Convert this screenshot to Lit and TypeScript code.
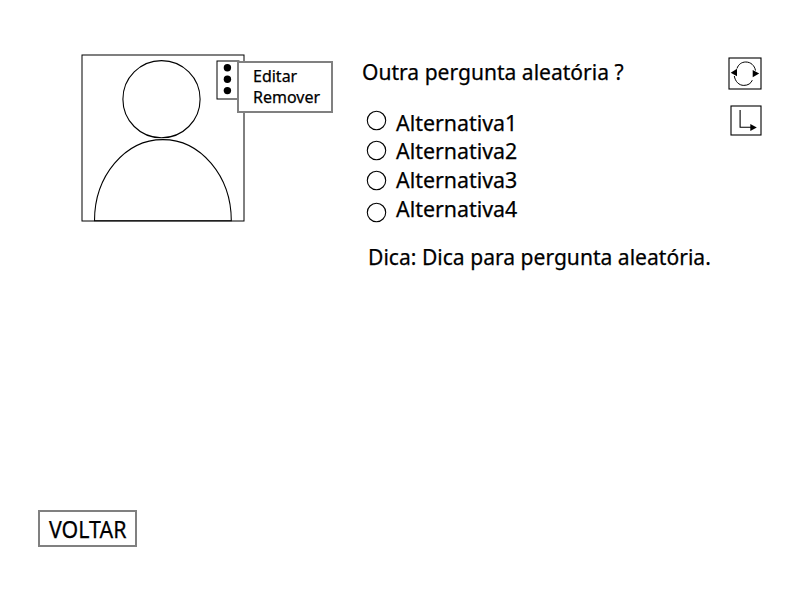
import { LitElement, html, css } from "lit";
import { customElement } from "lit/decorators.js";

const options = ["Alternativa1", "Alternativa2", "Alternativa3", "Alternativa4"];

@customElement("user-picture")
class UserPicture extends LitElement {
  static styles = css`
    :host { display: block; position: relative; width: 164px; height: 168px; }
    svg { display: block; }
    .menu {
      position: absolute; left: 156px; top: 7px; box-sizing: border-box;
      width: 96px; height: 52px; border: 2px solid #808080; background: #fff;
      padding: 3px 0 0 14px;
      font: 16px/21px "Noto Sans", "Open Sans", sans-serif; color: #000;
      -webkit-text-stroke: 0.25px #000;
    }
    .item { white-space: nowrap; }
  `;
  render() {
    return html`
      <svg width="164" height="168" viewBox="81 54 164 168" fill="none" stroke="#000">
        <rect x="82" y="55" width="162" height="166" />
        <circle cx="161.5" cy="99.2" r="38.6" stroke-width="1.1" />
        <path d="M94.5 220.8C94.5 176 125 139.6 162.8 139.6S231.3 176 231.3 220.8Z" stroke-width="1.1" />
        <rect x="217" y="61" width="22" height="38" fill="#fff" />
        <g fill="#000" stroke="none">
          <circle cx="227.4" cy="67.8" r="3.7" />
          <circle cx="227.4" cy="79.2" r="3.7" />
          <circle cx="227.4" cy="90.6" r="3.7" />
        </g>
      </svg>
      <div class="menu">
        <div class="item">Editar</div>
        <div class="item">Remover</div>
      </div>
    `;
  }
}

@customElement("app-root")
class AppRoot extends LitElement {
  static styles = css`
    :host {
      display: flex; flex-direction: column; justify-content: space-between;
      box-sizing: border-box; width: 800px; height: 600px;
      padding: 54px 38px 53px; background: #fff; color: #000; overflow: hidden;
      font: 22.5px/28px "Noto Sans", "Open Sans", sans-serif;
      -webkit-text-stroke: 0.25px #000;
    }
    .top { display: flex; align-items: flex-start; padding-left: 43px; }
    .quiz { margin-left: 117px; padding-top: 4px; width: 366px; }
    .text { white-space: nowrap; transform-origin: 0 0; }
    .question { transform: scaleX(0.936); }
    .answers { display: flex; margin-top: 22px; padding-left: 4px; }
    .radios { display: block; margin-right: 9px; }
    .labels { display: grid; grid-auto-rows: 28.7px; padding-top: 0.6px; }
    .label { transform: scaleX(0.95); }
    .hint { margin: 19.4px 0 0 6px; transform: scaleX(0.937); }
    .actions { display: grid; gap: 14px; margin-top: 3px; justify-items: end; }
    .actions svg { display: block; }
    .back {
      box-sizing: border-box; width: 99px; height: 37px; border: 2px solid #808080;
      background: #fff; padding: 0 0 0 9px; font: inherit; font-size: 23px; color: #000;
      text-align: left; align-self: flex-start;
      -webkit-text-stroke: 0.25px #000;
    }
    .back .text { display: block; transform: scaleX(0.93); }
  `;
  render() {
    return html`
      <div class="top">
        <user-picture></user-picture>
        <div class="quiz">
          <div class="text question">Outra pergunta aleatória ?</div>
          <div class="answers">
            <svg class="radios" width="21" height="116" viewBox="366 108 21 116" fill="none" stroke="#000" stroke-width="1.1">
              <circle cx="376.5" cy="120.5" r="9.2" />
              <circle cx="376.5" cy="150.5" r="9.2" />
              <circle cx="376.5" cy="180.5" r="9.2" />
              <circle cx="376.5" cy="212.5" r="9.2" />
            </svg>
            <div class="labels">
              ${options.map((o) => html`<div class="text label">${o}</div>`)}
            </div>
          </div>
          <div class="text hint">Dica: Dica para pergunta aleatória.</div>
        </div>
        <div class="actions">
          <svg width="34" height="34" viewBox="728 57 34 34" fill="none" stroke="#000">
            <rect x="729" y="58" width="32" height="31" stroke-width="1.1" />
            <path d="M737 68.5C738.3 64.5 741.5 62 745.8 62C750.8 62 754.6 65.5 755.5 70.5M734.3 76C735.2 81.5 739 85.4 743.8 85.4C748 85.4 751 83.5 752.3 80.2" />
            <path d="M737 68.8V76.2L730.7 72.7ZM752.7 70V77.2L759.2 73.6Z" fill="#000" stroke="none" />
          </svg>
          <svg width="32" height="32" viewBox="730 105 32 32" fill="none" stroke="#000">
            <rect x="731" y="106" width="30" height="29" stroke-width="1.1" />
            <path d="M740.1 110V127.2H751" stroke-width="1.1" />
            <path d="M750.3 124V131L756.8 127.5Z" fill="#000" stroke="none" />
          </svg>
        </div>
      </div>
      <button class="back"><span class="text">VOLTAR</span></button>
    `;
  }
}
